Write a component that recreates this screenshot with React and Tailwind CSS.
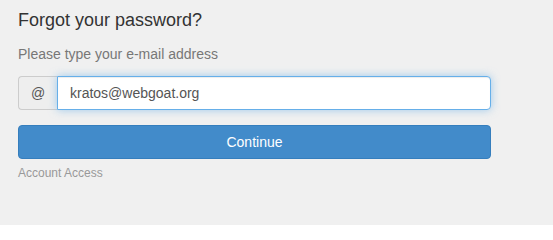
import React from 'react';

export default function App() {
  return (
    <div
      className="min-h-[225px] w-full bg-[#f0f0f0] pl-[18px] pt-[10px]"
      style={{ fontFamily: '"Liberation Sans", Arial, sans-serif' }}
    >
      <div className="w-[473px]">
        <h3 className="text-[18px] leading-[20px] text-[#333]">Forgot your password?</h3>
        <p className="mt-[14px] text-[14px] leading-[20px] text-[#777]">
          Please type your e-mail address
        </p>

        <div className="mt-[12px] flex h-[34px]">
          <span className="flex w-[39px] items-center justify-center rounded-l-[4px] border border-r-0 border-[#ccc] bg-[#eee] text-[14px] text-[#555]">
            @
          </span>
          <input
            type="text"
            defaultValue="kratos@webgoat.org"
            className="h-[34px] flex-1 rounded-r-[4px] border border-[#66afe9] bg-white px-[12px] text-[14px] text-[#555] outline-none shadow-[inset_0_1px_1px_rgba(0,0,0,0.075),0_0_8px_rgba(102,175,233,0.6)]"
          />
        </div>

        <button
          type="button"
          className="mt-[15px] flex h-[34px] w-full items-center justify-center rounded-[4px] border border-[#357ebd] bg-[#428bca] text-[14px] text-white"
        >
          Continue
        </button>

        <div className="mt-[6px] text-[12px] leading-[17px] text-[#999]">Account Access</div>
      </div>
    </div>
  );
}
